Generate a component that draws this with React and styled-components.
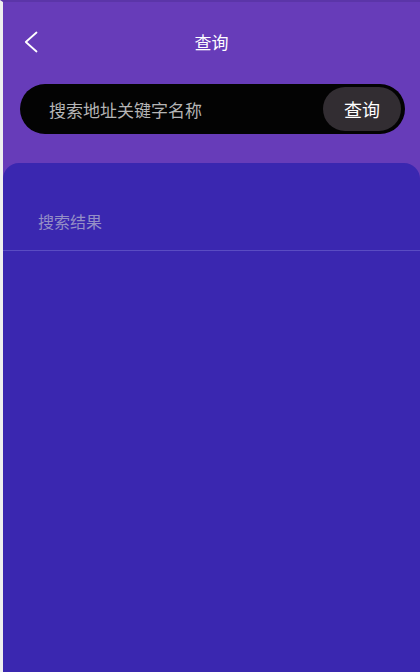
import styled, { createGlobalStyle } from "styled-components";

const GlobalStyle = createGlobalStyle`
  html, body {
    margin: 0;
    padding: 0;
    background: #efefef;
  }
  * {
    box-sizing: border-box;
  }
  body {
    font-family: "Noto Sans CJK SC", "Noto Sans", sans-serif;
  }
`;

const App = () => {
  return (
    <>
      <GlobalStyle />
      <Page>
        <NavBar>
          <BackButton aria-label="back">
            <svg width="14" height="22" viewBox="0 0 14 22">
              <polyline
                points="12.5,1.5 1.8,11 12.5,20.5"
                fill="none"
                stroke="#ffffff"
                strokeWidth="1.8"
                strokeLinecap="round"
                strokeLinejoin="round"
              />
            </svg>
          </BackButton>
          <Title>查询</Title>
          <span />
        </NavBar>
        <SearchWrap>
          <SearchBar>
            <SearchInput placeholder="搜索地址关键字名称" />
            <SearchButton>查询</SearchButton>
          </SearchBar>
        </SearchWrap>
        <Panel>
          <ResultHeader>搜索结果</ResultHeader>
        </Panel>
      </Page>
    </>
  );
};

const Page = styled.div`
  min-height: 100vh;
  display: flex;
  flex-direction: column;
  background: #673cb9;
  border-left: 3px solid #efefef;
  border-top: 2px solid #5b35a8;
`;

const NavBar = styled.div`
  height: 80px;
  display: grid;
  grid-template-columns: 1fr auto 1fr;
  align-items: center;
`;

const BackButton = styled.button`
  justify-self: start;
  margin-left: 21px;
  padding: 0;
  border: none;
  background: transparent;
  display: flex;
  align-items: center;
  cursor: pointer;
`;

const Title = styled.div`
  color: #ffffff;
  font-size: 17px;
  line-height: 20px;
`;

const SearchWrap = styled.div`
  padding: 2px 15px 0 17px;
`;

const SearchBar = styled.div`
  height: 50px;
  border-radius: 25px;
  background: #030303;
  display: flex;
  align-items: center;
  padding: 0 4px 0 29px;
`;

const SearchInput = styled.input`
  flex: 1;
  min-width: 0;
  border: none;
  outline: none;
  background: transparent;
  color: #ffffff;
  font-family: inherit;
  font-size: 17px;
  padding: 0;

  &::placeholder {
    color: #b5b5b5;
  }
`;

const SearchButton = styled.button`
  width: 78px;
  height: 44px;
  border: none;
  border-radius: 22px;
  background: #322d32;
  color: #ffffff;
  font-family: inherit;
  font-size: 18px;
  padding: 0;
  cursor: pointer;
`;

const Panel = styled.div`
  flex: 1;
  margin-top: 29px;
  background: #3a27b0;
  border-radius: 16px 16px 0 0;
`;

const ResultHeader = styled.div`
  padding: 48px 0 19px 35px;
  line-height: 20px;
  font-size: 16px;
  color: #958fc6;
  border-bottom: 1px solid #5a4cc2;
`;

export default App;
